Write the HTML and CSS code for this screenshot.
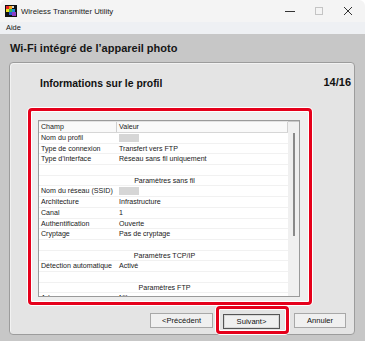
FILE: index.html
```html
<!DOCTYPE html>
<html lang="fr">
<head>
    <meta charset="UTF-8">
    <title>Wireless Transmitter Utility</title>
    <link rel="stylesheet" href="styles.css">
</head>
<body>
    <div class="window">
        <div class="titlebar">
            <svg class="app-icon" width="12" height="12" viewBox="0 0 12 12">
                <rect width="12" height="12" fill="#111"/>
                <rect x="1" y="1" width="3" height="3" fill="#e8262a"/>
                <rect x="4" y="1" width="3" height="3" fill="#f7a21b"/>
                <rect x="1" y="4" width="3" height="3" fill="#f0e020"/>
                <rect x="4" y="4" width="3" height="3" fill="#3bb54a"/>
                <rect x="7" y="4" width="3" height="3" fill="#1c8fd6"/>
                <rect x="4" y="7" width="3" height="3" fill="#2a5bd8"/>
                <rect x="7" y="7" width="4" height="4" fill="#8b3fc4"/>
                <rect x="7" y="1" width="2" height="2" fill="#d8d8d8"/>
            </svg>
            <span class="title">Wireless Transmitter Utility</span>
            <div class="controls">
                <svg width="10" height="10" viewBox="0 0 10 10"><line x1="0" y1="5.5" x2="10" y2="5.5" stroke="#333" stroke-width="1"/></svg>
                <svg width="10" height="10" viewBox="0 0 10 10"><rect x="1.5" y="1.5" width="7" height="7" fill="none" stroke="#c4c4c4" stroke-width="1"/></svg>
                <svg width="10" height="10" viewBox="0 0 10 10"><path d="M1 1 L9 9 M9 1 L1 9" stroke="#333" stroke-width="1"/></svg>
            </div>
        </div>
        <div class="menubar"><span>Aide</span></div>

        <div class="frame">
            <div class="heading">Wi-Fi intégré de l’appareil photo</div>
            <div class="panel">
                <div class="panel-head">
                    <span class="panel-title">Informations sur le profil</span>
                    <span class="step">14/16</span>
                </div>

                <div class="mark list-box">
                    <div class="list">
                        <div class="list-main">
                            <div class="row head">
                                <div class="c1">Champ</div>
                                <div class="c2">Valeur</div>
                            </div>
                            <div class="row"><div class="c1">Nom du profil</div><div class="c2"><span class="hidden-value"></span></div></div>
                            <div class="row"><div class="c1">Type de connexion</div><div class="c2">Transfert vers FTP</div></div>
                            <div class="row"><div class="c1">Type d’interface</div><div class="c2">Réseau sans fil uniquement</div></div>
                            <div class="row"></div>
                            <div class="row section">Paramètres sans fil</div>
                            <div class="row"><div class="c1">Nom du réseau (SSID)</div><div class="c2"><span class="hidden-value"></span></div></div>
                            <div class="row"><div class="c1">Architecture</div><div class="c2">Infrastructure</div></div>
                            <div class="row"><div class="c1">Canal</div><div class="c2">1</div></div>
                            <div class="row"><div class="c1">Authentification</div><div class="c2">Ouverte</div></div>
                            <div class="row"><div class="c1">Cryptage</div><div class="c2">Pas de cryptage</div></div>
                            <div class="row"></div>
                            <div class="row section">Paramètres TCP/IP</div>
                            <div class="row"><div class="c1">Détection automatique</div><div class="c2">Activé</div></div>
                            <div class="row"></div>
                            <div class="row section">Paramètres FTP</div>
                            <div class="row"><div class="c1">Adresse</div><div class="c2">Nikon</div></div>
                        </div>
                        <div class="scrollbar"><div class="thumb"></div></div>
                    </div>
                </div>

                <div class="buttons">
                    <button class="btn">&lt;Précédent</button>
                    <span class="mark focus"><button class="btn default">Suivant&gt;</button></span>
                    <button class="btn">Annuler</button>
                </div>
            </div>
        </div>
    </div>
</body>
</html>
```

FILE: styles.css
```css
* {
    margin: 0;
    padding: 0;
    box-sizing: border-box;
}
body {
    background: #fff;
    font-family: "Liberation Sans", Arial, sans-serif;
    color: #111;
}
.window {
    width: 365px;
    height: 341px;
    overflow: hidden;
    border-radius: 6px 6px 0 0;
    display: flex;
    flex-direction: column;
}
.titlebar {
    height: 22px;
    background: #f4f4f4;
    display: flex;
    align-items: center;
    padding-left: 5px;
}
.app-icon {
    display: block;
}
.title {
    font-size: 7.8px;
    margin-left: 4px;
    color: #1a1a1a;
}
.controls {
    margin-left: auto;
    display: flex;
    align-items: center;
    gap: 19px;
    padding-right: 12px;
}
.controls svg {
    display: block;
}
.menubar {
    height: 12px;
    background: #eef0f3;
    font-size: 7.4px;
    padding-left: 6px;
    line-height: 12px;
}
.frame {
    flex: 1;
    background: #c7c7c7;
    display: flex;
    flex-direction: column;
}
.heading {
    height: 28px;
    padding-left: 10px;
    padding-top: 8px;
    font-size: 11px;
    font-weight: bold;
    color: #161616;
}
.panel {
    margin: 0 10px 6px 9px;
    background: #e4e4e4;
    border: 1px solid #9c9c9c;
    border-radius: 4px;
    box-shadow: inset 1px 1px 0 #f2f2f2;
    display: flex;
    flex-direction: column;
}
.panel-head {
    height: 45px;
    display: flex;
    align-items: flex-start;
    justify-content: space-between;
    padding: 13px 3px 0 30px;
}
.panel-title {
    font-size: 10.4px;
    font-weight: bold;
    padding-top: 2px;
}
.step {
    font-size: 11px;
    font-weight: bold;
}
.mark {
    border: 3px solid #e5001b;
    border-radius: 4px;
    box-shadow: 0 0 0 1px #fff, inset 0 0 0 1px #fff;
}
.list-box {
    margin-left: 18px;
    width: 284px;
    background: #eeeeee;
    padding: 9px 9px 5px 7px;
}
.list {
    height: 177px;
    border: 1px solid #9a9a9a;
    background: #fff;
    display: flex;
    overflow: hidden;
}
.list-main {
    width: 249px;
    overflow: hidden;
}
.row {
    height: 10.7px;
    display: flex;
    font-size: 7.1px;
    line-height: 10px;
    border-bottom: 1px solid #f1f1f1;
    color: #1a1a1a;
    white-space: nowrap;
}
.row.head {
    height: 12px;
    line-height: 11px;
    background: #f9f9f9;
    border-top: 1px solid #e2e2e2;
    border-bottom: 1px solid #d6d6d6;
}
.c1 {
    width: 78px;
    padding-left: 2px;
}
.c2 {
    flex: 1;
    padding-left: 2px;
}
.head .c1,
.head .c2 {
    border-right: 1px solid #d0d0d0;
}
.section {
    justify-content: center;
    padding-left: 2px;
}
.hidden-value {
    display: inline-block;
    width: 20px;
    height: 8px;
    margin-top: 1px;
    vertical-align: top;
    background: #d6d6d6;
    filter: blur(0.6px);
}
.scrollbar {
    flex: 1;
    background: #f0f0f0;
    border-top: 1px solid #c8c8c8;
    position: relative;
}
.thumb {
    position: absolute;
    left: 5px;
    top: 11px;
    width: 2px;
    height: 103px;
    background: #8a8a8a;
}
.buttons {
    margin-top: 1px;
    display: flex;
    align-items: center;
    justify-content: flex-end;
    padding-right: 8px;
}
.btn {
    font-family: "Liberation Sans", Arial, sans-serif;
    font-size: 7.6px;
    height: 15px;
    background: #f0f0f0;
    border: 1px solid #a8a8a8;
    color: #111;
    width: 63px;
}
.focus {
    display: flex;
    height: 28px;
    margin: 0 5px 0 3px;
    padding: 2px 6px 0 4px;
    align-items: center;
}
.btn.default {
    width: 57px;
    border: 1px solid #555;
    box-shadow: inset 0 0 0 1px #d8d8d8;
}
.buttons > .btn:last-child {
    width: 52px;
}
```
